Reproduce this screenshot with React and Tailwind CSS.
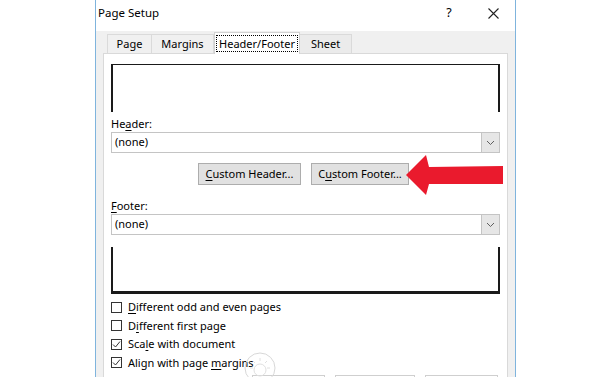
function U({ children }) {
  return <span className="underline underline-offset-2">{children}</span>;
}

function Dropdown() {
  return (
    <div className="h-[21px] border border-[#c4c4c4] flex items-center bg-white">
      <span className="pl-[3px] flex-1">(none)</span>
      <div className="w-[18px] h-full bg-[#e6e6e6] border-l border-[#c4c4c4] flex items-center justify-center">
        <svg width="9" height="6" viewBox="0 0 9 6">
          <path d="M1 1l3.5 3.5L8 1" fill="none" stroke="#606060" strokeWidth="1" />
        </svg>
      </div>
    </div>
  );
}

function Check({ checked, children }) {
  return (
    <div className="h-[18.5px] flex items-center gap-[6px]">
      <div className="w-[11px] h-[11px] shrink-0 border border-[#333] bg-white flex items-center justify-center">
        {checked && (
          <svg width="9" height="9" viewBox="0 0 9 9">
            <path d="M1 4.5l2.5 2.5L8 1.5" fill="none" stroke="#333" strokeWidth="1" />
          </svg>
        )}
      </div>
      <span>{children}</span>
    </div>
  );
}

export default function App() {
  return (
    <div
      className="w-[600px] h-[377px] bg-white relative overflow-hidden flex text-[11px] text-black"
      style={{ fontFamily: '"Noto Sans", "Open Sans", sans-serif' }}
    >
      {/* dialog */}
      <div className="ml-[95px] w-[421px] h-full border-l border-r border-[#7fb4dd] flex flex-col">
        {/* title bar */}
        <div className="h-[31px] bg-white flex items-center pl-[2px] pr-[16px] pb-[5px] shrink-0">
          <span className="flex-1 text-[11.5px]">Page Setup</span>
          <span className="w-[10px] text-center text-[12.5px] mr-[34px]">?</span>
          <svg width="11" height="11" viewBox="0 0 11 11">
            <path d="M0.5 0.5l10 10M10.5 0.5l-10 10" stroke="#222" strokeWidth="1.1" />
          </svg>
        </div>

        <div className="flex-1 bg-[#f0f0f0] px-[7px] flex flex-col">
          {/* tabs */}
          <div className="h-[22px] flex items-end pl-[4px] shrink-0 relative z-10">
            <div className="h-[19px] w-[45px] border border-b-0 border-[#dadada] bg-[#f0f0f0] flex items-center justify-center">Page</div>
            <div className="h-[19px] w-[62px] border border-b-0 border-l-0 border-[#dadada] bg-[#f0f0f0] flex items-center justify-center">Margins</div>
            <div className="h-[22px] w-[86px] border border-b-0 border-[#d2d2d2] bg-white flex items-center justify-center -mb-[1px] pb-[1px]">
              <span className="border border-dotted border-black px-[2px] leading-[15px]">Header/Footer</span>
            </div>
            <div className="h-[19px] w-[52px] border border-b-0 border-l-0 border-[#dadada] bg-[#ebebeb] flex items-center justify-center">Sheet</div>
          </div>

          {/* panel */}
          <div className="flex-1 bg-white border border-[#d9d9d9] px-[7px]">
            <div className="mt-[10px] h-[48px] border-t-[1.5px] border-l-2 border-r-2 border-[#1a1a1a]" />

            <div className="mt-[4px] h-[16px] leading-[16px]">He<U>a</U>der:</div>
            <Dropdown />

            <div className="mt-[10px] flex gap-[10px] pl-[87px]">
              <div className="h-[22px] w-[103px] bg-[#e1e1e1] border border-[#adadad] flex items-center justify-center">
                <span><U>C</U>ustom Header...</span>
              </div>
              <div className="h-[22px] w-[98px] bg-[#e1e1e1] border border-[#adadad] flex items-center justify-center">
                <span>C<U>u</U>stom Footer...</span>
              </div>
            </div>

            <div className="mt-[13px] h-[16px] leading-[16px]"><U>F</U>ooter:</div>
            <Dropdown />

            <div className="mt-[12px] h-[47px] border-l-2 border-r-2 border-b-[3px] border-[#1a1a1a]" />

            <div className="mt-[4px] flex flex-col">
              <Check><U>D</U>ifferent odd and even pages</Check>
              <Check>D<U>i</U>fferent first page</Check>
              <Check checked>Sca<U>l</U>e with document</Check>
              <Check checked>Align with page <U>m</U>argins</Check>
            </div>

            <div className="mt-[3px] flex gap-[10px] pl-[141px]">
              <div className="h-[22px] w-[73px] border border-[#cfcfcf]" />
              <div className="h-[22px] w-[80px] border border-[#cfcfcf]" />
              <div className="h-[22px] w-[73px] border border-[#cfcfcf]" />
            </div>
          </div>
        </div>
      </div>

      {/* faint watermark */}
      <svg className="absolute left-[240px] top-[348px]" width="40" height="40" viewBox="0 0 40 40">
        <circle cx="20" cy="20" r="15" fill="none" stroke="#d8d8d8" strokeWidth="1" />
        <circle cx="20" cy="22" r="6" fill="none" stroke="#e0e0e0" strokeWidth="1" />
        <path d="M20 10v3M13 13l2 2M27 13l-2 2M10 20h3M27 20h3" stroke="#e0e0e0" strokeWidth="1" />
      </svg>

      {/* red arrow */}
      <svg className="absolute left-[403px] top-[153px]" width="102" height="44" viewBox="403 153 102 44">
        <polygon
          points="406,175 426,155 429,167 503,166 503,184 429,184 426,195"
          fill="#ea1a2d"
        />
      </svg>
    </div>
  );
}
